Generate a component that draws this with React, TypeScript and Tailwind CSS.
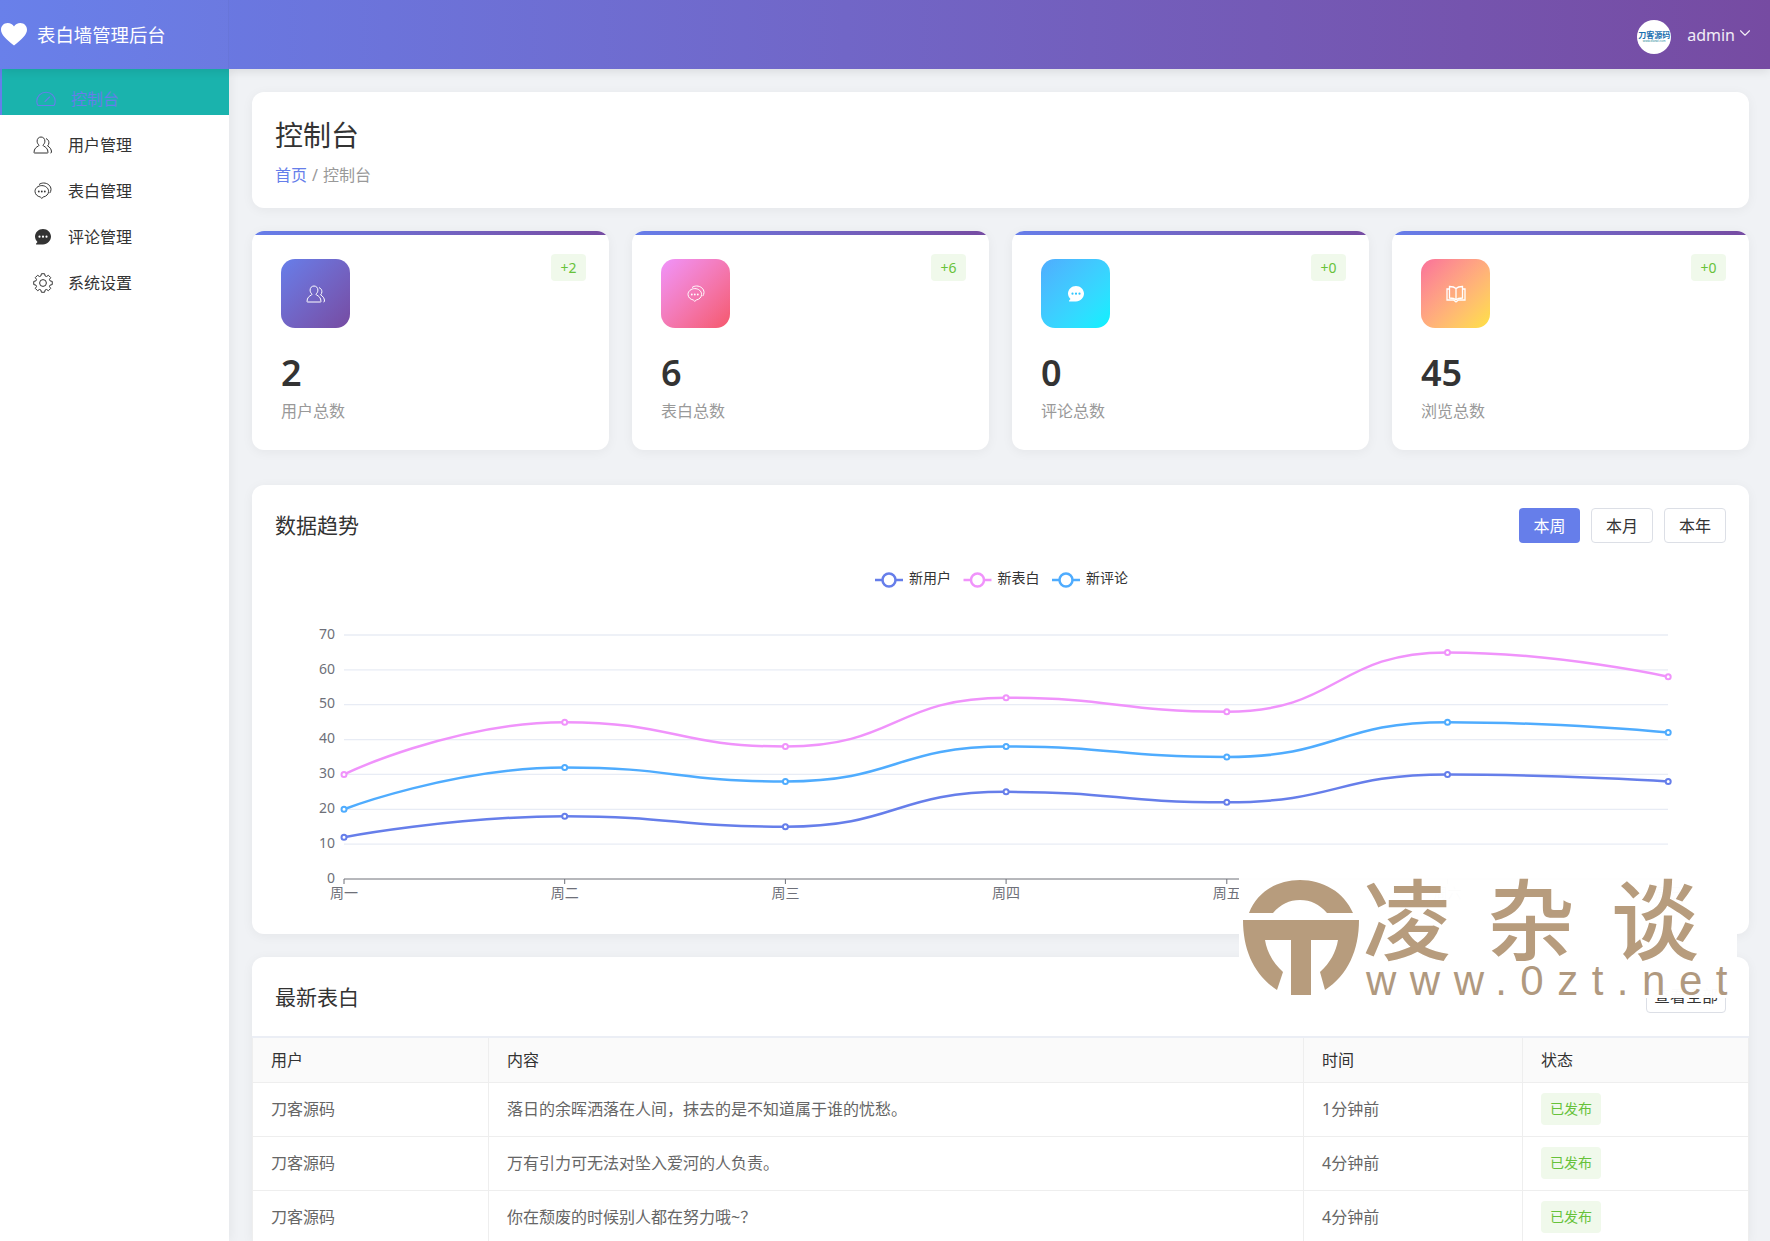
import React from 'react';
import { ChevronDown } from 'lucide-react';

const days = ['周一', '周二', '周三', '周四', '周五', '周六', '周日'];
const series = [
  { name: '新用户', color: '#667eea', data: [12, 18, 15, 25, 22, 30, 28] },
  { name: '新表白', color: '#f093fb', data: [30, 45, 38, 52, 48, 65, 58] },
  { name: '新评论', color: '#4facfe', data: [20, 32, 28, 38, 35, 45, 42] },
];

const xAt = (i: number) => 344 + i * 220.7;
const yAt = (v: number) => 880 - v * 3.486;

// same monotone smoothing the chart library does for smooth lines
const smoothPath = (data: number[]) => {
  const pts = data.map((v, i) => [xAt(i), yAt(v)]);
  const clamp = (v: number, a: number, b: number) => Math.max(Math.min(v, Math.max(a, b)), Math.min(a, b));
  let d = `M${pts[0][0]} ${pts[0][1]}`;
  let cx0 = pts[0][0];
  let cy0 = pts[0][1];
  for (let i = 1; i < pts.length; i++) {
    const [x, y] = pts[i];
    const [px, py] = pts[i - 1];
    const next = pts[i + 1];
    let cx1 = x;
    let cy1 = y;
    let nx = x;
    let ny = y;
    if (next) {
      const lenPrev = Math.hypot(x - px, y - py);
      const lenNext = Math.hypot(next[0] - x, next[1] - y);
      const ratio = lenNext / (lenNext + lenPrev);
      nx = clamp(x + (next[0] - px) * 0.5 * ratio, next[0], x);
      ny = clamp(y + (next[1] - py) * 0.5 * ratio, next[1], y);
      cx1 = clamp(x - ((nx - x) * lenPrev) / lenNext, px, x);
      cy1 = clamp(y - ((ny - y) * lenPrev) / lenNext, py, y);
      nx = x + ((x - cx1) * lenNext) / lenPrev;
      ny = y + ((y - cy1) * lenNext) / lenPrev;
    }
    d += ` C${cx0} ${cy0} ${cx1} ${cy1} ${x} ${y}`;
    cx0 = nx;
    cy0 = ny;
  }
  return d;
};

// 8 tooth gear outline
const gearPath = (() => {
  const p: string[] = [];
  for (let i = 0; i < 8; i++) {
    const a = (i * Math.PI) / 4;
    const at = (r: number, off: number) => `${(10 + r * Math.cos(a + off)).toFixed(2)} ${(10 + r * Math.sin(a + off)).toFixed(2)}`;
    p.push(`${i === 0 ? 'M' : 'L'}${at(7.3, -0.3)}`, `L${at(9.4, -0.17)}`, `L${at(9.4, 0.17)}`, `L${at(7.3, 0.3)}`);
  }
  return p.join(' ') + 'Z';
})();

const GaugeIcon = ({ className }: { className?: string }) => (
  <svg viewBox="0 0 20 16" fill="none" stroke="currentColor" strokeWidth="1.1" className={className}>
    <path d="M2 14.500C1.200 13.200.8 11.800.8 10.300.8 5.200 4.900 1.200 10 1.200s9.200 4 9.200 9.100c0 1.500-.4 2.900-1.200 4.200z" />
    <path d="M9 10.500l4.500-4.500" strokeLinecap="round" />
  </svg>
);

const UserIcon = ({ className }: { className?: string }) => (
  <svg viewBox="0 0 20 18" fill="none" stroke="currentColor" strokeWidth="1" className={className}>
    <path d="M8 1c-2.300 0-3.900 1.800-3.900 4.100 0 1.600.7 2.900 1.700 3.800.3.300.2.800-.2 1C3.300 11 1 12.700 1 16.500c0 .3.200.5.500.5h13c.3 0 .5-.2.500-.5 0-3.800-2.300-5.500-4.600-6.600-.4-.2-.5-.7-.2-1 1-.9 1.700-2.200 1.700-3.800C11.900 2.800 10.300 1 8 1z" />
    <path d="M13 2.600c1.800.6 2.900 2.200 2.900 4.100 0 1.300-.5 2.400-1.300 3.200 2 1.200 3.900 3.100 3.900 6.100 0 .5-.2 1-1 1" />
  </svg>
);

const LoveIcon = ({ className, dots }: { className?: string; dots?: string }) => (
  <svg viewBox="0 0 18 17" fill="none" stroke="currentColor" strokeWidth="1" className={className}>
    <path d="M7.800 3.600C4.100 3.600 1 6.200 1 9.400c0 2.800 2.300 5 5.300 5.600l1.500 1.400 1.500-1.400c3-.6 5.300-2.800 5.300-5.600 0-3.200-3.100-5.800-6.800-5.800z" />
    <path d="M5 2.600C6.300 1.500 8 1 9.600 1c4.100 0 7.400 2.900 7.400 6.400 0 1.500-.5 2.700-1.300 3.700" />
    <circle cx="4.800" cy="9.500" r=".9" fill={dots ?? 'currentColor'} stroke="none" />
    <circle cx="7.800" cy="9.500" r=".9" fill={dots ?? 'currentColor'} stroke="none" />
    <circle cx="10.800" cy="9.500" r=".9" fill={dots ?? 'currentColor'} stroke="none" />
  </svg>
);

const CommentIcon = ({ className, dots }: { className?: string; dots: string }) => (
  <svg viewBox="0 0 18 18" className={className}>
    <path fill="currentColor" d="M9 1c4.400 0 8 3.400 8 7.600s-3.600 7.800-8 7.800H2.600c-.6 0-.8-.6-.4-1l1.300-1.400C2 12.700 1 10.700 1 8.600 1 4.400 4.600 1 9 1z" />
    <circle cx="5.500" cy="8.700" r="1.100" fill={dots} />
    <circle cx="9" cy="8.700" r="1.100" fill={dots} />
    <circle cx="12.500" cy="8.700" r="1.100" fill={dots} />
  </svg>
);

const GearIcon = ({ className }: { className?: string }) => (
  <svg viewBox="0 0 20 20" fill="none" stroke="currentColor" strokeWidth="1" strokeLinejoin="round" className={className}>
    <path d={gearPath} />
    <circle cx="10" cy="10" r="3.400" />
  </svg>
);

const BookIcon = ({ className }: { className?: string }) => (
  <svg viewBox="0 0 20 18" fill="none" stroke="currentColor" strokeWidth="1.300" className={className}>
    <path d="M10 3.500C8.500 2 6.300 1.500 3.500 1.500V13c2.800 0 5 .4 6.500 1.800 1.500-1.400 3.700-1.800 6.500-1.800V1.500c-2.800 0-5 .5-6.500 2zM10 3.500v11.300" />
    <path d="M3.500 4H1v11h6.500l2.500 2 2.500-2H19V4h-2.500" />
  </svg>
);

const menu = [
  { label: '用户管理', icon: <UserIcon className="w-[20px] h-[18px]" /> },
  { label: '表白管理', icon: <LoveIcon className="w-[18px] h-[17px] ml-[1px]" /> },
  { label: '评论管理', icon: <CommentIcon className="w-[18px] h-[18px] ml-[1px]" dots="#ffffff" /> },
  { label: '系统设置', icon: <GearIcon className="w-[20px] h-[20px]" /> },
];

const stats = [
  { label: '用户总数', value: '2', inc: '+2', bg: 'bg-gradient-to-br from-[#667eea] to-[#764ba2]', icon: <UserIcon className="w-[20px] h-[18px]" /> },
  { label: '表白总数', value: '6', inc: '+6', bg: 'bg-gradient-to-br from-[#f093fb] to-[#f5576c]', icon: <LoveIcon className="w-[18px] h-[17px]" dots="#ffffff" /> },
  { label: '评论总数', value: '0', inc: '+0', bg: 'bg-gradient-to-br from-[#4facfe] to-[#00f2fe]', icon: <CommentIcon className="w-[18px] h-[18px]" dots="#2fc6fe" /> },
  { label: '浏览总数', value: '45', inc: '+0', bg: 'bg-gradient-to-br from-[#fa709a] to-[#fee140]', icon: <BookIcon className="w-[20px] h-[18px]" /> },
];

const rows = [
  { user: '刀客源码', text: '落日的余晖洒落在人间，抹去的是不知道属于谁的忧愁。', time: '1分钟前' },
  { user: '刀客源码', text: '万有引力可无法对坠入爱河的人负责。', time: '4分钟前' },
  { user: '刀客源码', text: '你在颓废的时候别人都在努力哦~？', time: '4分钟前' },
];

const TrendChart = () => (
  <svg viewBox="252 560 1497 375" className="block w-[1497px] h-[375px]">
    {[10, 20, 30, 40, 50, 60, 70].map((v) => (
      <line key={v} x1="344" x2="1668" y1={yAt(v)} y2={yAt(v)} stroke="#e0e6f1" strokeOpacity="0.75" strokeWidth="1.300" />
    ))}
    {[0, 10, 20, 30, 40, 50, 60, 70].map((v) => (
      <text key={v} x="335" y={yAt(v)} textAnchor="end" dominantBaseline="middle" fontSize="14" fill="#6e7079">
        {v}
      </text>
    ))}
    <line x1="344" x2="1668" y1="880" y2="880" stroke="#6e7079" />
    {days.map((d, i) => (
      <g key={d}>
        <line x1={xAt(i)} x2={xAt(i)} y1="880" y2="885" stroke="#6e7079" />
        <text x={xAt(i)} y="895" textAnchor="middle" dominantBaseline="middle" fontSize="14" fill="#6e7079">
          {d}
        </text>
      </g>
    ))}
    {series.map((s) => (
      <g key={s.name}>
        <path d={smoothPath(s.data)} fill="none" stroke={s.color} strokeWidth="2.500" />
        {s.data.map((v, i) => (
          <circle key={i} cx={xAt(i)} cy={yAt(v)} r="2.500" fill="#ffffff" stroke={s.color} strokeWidth="2" />
        ))}
      </g>
    ))}
    {series.map((s, i) => {
      const x = 875 + i * 88.500;
      return (
        <g key={s.name}>
          <line x1={x} x2={x + 28} y1="581" y2="581" stroke={s.color} strokeWidth="2.500" />
          <circle cx={x + 14} cy="581" r="6.500" fill="#ffffff" stroke={s.color} strokeWidth="2.500" />
          <text x={x + 34} y="580" dominantBaseline="middle" fontSize="14" fill="#333333">
            {s.name}
          </text>
        </g>
      );
    })}
  </svg>
);

const Watermark = () => (
  <div className="absolute left-[1239px] top-[873px] w-[498px] h-[125px] bg-white/[0.98] text-[#b79c7d]">
    <svg viewBox="0 0 116 116" className="absolute left-[4px] top-[7px] w-[116px] h-[116px]">
      <path fill="#b79c7d" d="M6 33C14 12 34 0 57 0s44 12 53 33H84C76 24 68 20 57 20S38 24 30 33z" />
      <path fill="#b79c7d" d="M0 40H116C116 70 105 95 82 110L77 92C87 83 93 72 95 60H68V115H48V60H22C24 72 30 83 40 92L34 110C11 95 0 70 0 40z" />
    </svg>
    <div className="absolute left-[124px] top-[-6px] text-[88px] leading-[104px] font-medium whitespace-nowrap tracking-[36px]">凌杂谈</div>
    <div className="absolute left-[127px] top-[87px] text-[42px] leading-[42px] text-[#b0997f] whitespace-nowrap tracking-[13.500px] [font-family:'Liberation_Sans',sans-serif]">www.0zt.net</div>
  </div>
);

export default function App() {
  return (
    <div className="relative w-[1770px] h-[1241px] overflow-hidden bg-[#f0f2f5] flex flex-col [font-family:'Noto_Sans','Noto_Sans_CJK_SC',sans-serif]">
      <header className="z-10 h-[69px] shrink-0 flex items-center bg-gradient-to-r from-[#667eea] to-[#764ba2] shadow-[0_2px_10px_rgba(0,0,0,0.1)]">
        <div className="w-[229px] h-full flex items-center gap-[10px] pl-[1px] bg-white/[0.02] border-r border-black/[0.03]">
          <svg viewBox="0 0 26 23" className="w-[26px] h-[23px]">
            <path fill="#ffffff" d="M13 22.500C5 16 0 11.600 0 6.700 0 2.900 2.900 0 6.700 0 9.300 0 11.800 1.300 13 3.400 14.200 1.300 16.700 0 19.300 0 23.100 0 26 2.900 26 6.700c0 4.900-5 9.300-13 15.800z" />
          </svg>
          <span className="text-[18.400px] pt-[1px] text-white whitespace-nowrap">表白墙管理后台</span>
        </div>
        <div className="ml-auto flex items-center pr-[16px] pt-[4px]">
          <div className="w-[34px] h-[34px] rounded-full bg-white flex flex-col items-center justify-center">
            <span className="text-[8px] leading-[9px] font-bold text-[#1a6fb0] whitespace-nowrap">刀客源码</span>
            <span className="text-[3px] leading-[4px] text-[#2a8a9a] whitespace-nowrap">www.dkewl.com</span>
          </div>
          <span className="ml-[16px] text-[16px] text-white/90 -mt-[4px]">admin</span>
          <ChevronDown className="ml-[1px] -mt-[8px] text-white/90" size={18} strokeWidth={1.500} />
        </div>
      </header>
      <div className="flex flex-1 min-h-0">
        <aside className="w-[229px] shrink-0 bg-white shadow-[2px_0_10px_rgba(0,0,0,0.05)]">
          <div className="h-[46px] flex items-center gap-[15px] border-l-2 border-[#667eea] bg-[#1ab3ad] pl-[34px] pt-[13px] text-[#667eea]">
            <GaugeIcon className="w-[20px] h-[16px]" />
            <span className="text-[16px]">控制台</span>
          </div>
          {menu.map((m) => (
            <div key={m.label} className="h-[46px] flex items-center pl-[33px] pt-[13px] text-[#333333]">
              <span className="w-[35px] flex items-center">{m.icon}</span>
              <span className="text-[16px]">{m.label}</span>
            </div>
          ))}
        </aside>
        <main className="flex-1 min-w-0 pt-[23px] pl-[23px] pr-[21px] flex flex-col">
          <section className="h-[116px] shrink-0 rounded-[12px] bg-white px-[23px] pt-[23px] shadow-[0_2px_12px_rgba(0,0,0,0.05)]">
            <h1 className="text-[28px] leading-[40px] text-[#333333]">控制台</h1>
            <div className="mt-[8px] text-[16px] leading-[24px] text-[#999999]">
              <span className="text-[#667eea]">首页</span>
              <span className="mx-[5px]">/</span>
              <span>控制台</span>
            </div>
          </section>
          <section className="mt-[23px] grid grid-cols-4 gap-[23px] shrink-0">
            {stats.map((s) => (
              <div key={s.label} className="relative h-[219px] rounded-[12px] bg-white overflow-hidden shadow-[0_2px_12px_rgba(0,0,0,0.05)]">
                <div className="h-[4px] bg-gradient-to-r from-[#667eea] to-[#764ba2]" />
                <div className="px-[29px] pt-[24px]">
                  <div className={`w-[69px] h-[69px] rounded-[14px] flex items-center justify-center text-white ${s.bg}`}>{s.icon}</div>
                  <div className="mt-[27px] text-[36px] leading-[36px] font-semibold text-[#333333]">{s.value}</div>
                  <div className="mt-[8px] text-[16px] leading-[24px] text-[#999999]">{s.label}</div>
                </div>
                <span className="absolute top-[23px] right-[23px] w-[35px] h-[27px] rounded-[4px] bg-[#f0f9eb] text-[14px] leading-[27px] text-center text-[#67c23a]">{s.inc}</span>
              </div>
            ))}
          </section>
          <section className="mt-[35px] h-[449px] shrink-0 rounded-[12px] bg-white overflow-hidden shadow-[0_2px_12px_rgba(0,0,0,0.05)]">
            <div className="px-[23px] pt-[23px] h-[74px] flex justify-between">
              <h2 className="text-[21px] leading-[35px] text-[#333333]">数据趋势</h2>
              <div className="flex gap-[11px] h-[35px]">
                <button className="w-[61px] rounded-[4px] bg-[#667eea] text-white text-[16px]">本周</button>
                <button className="w-[62px] rounded-[4px] border border-[#dcdfe6] bg-white text-[#333333] text-[16px]">本月</button>
                <button className="w-[62px] rounded-[4px] border border-[#dcdfe6] bg-white text-[#333333] text-[16px]">本年</button>
              </div>
            </div>
            <TrendChart />
          </section>
          <section className="mt-[23px] flex-1 rounded-t-[12px] bg-white overflow-hidden shadow-[0_2px_12px_rgba(0,0,0,0.05)]">
            <div className="px-[23px] pt-[21px] pb-[23px] flex justify-between border-b-2 border-[#ebeef5]">
              <h2 className="text-[21px] leading-[35px] mt-[2px] -mb-[2px] text-[#333333]">最新表白</h2>
              <button className="w-[80px] h-[35px] rounded-[4px] border border-[#dcdfe6] bg-white text-[#333333] text-[16px] whitespace-nowrap">查看全部</button>
            </div>
            <table className="w-full table-fixed border-collapse text-[16px] text-left">
              <colgroup>
                <col className="w-[236px]" />
                <col className="w-[815px]" />
                <col className="w-[219px]" />
                <col />
              </colgroup>
              <thead>
                <tr className="h-[44px] bg-[#fafafa] text-[#333333]">
                  {['用户', '内容', '时间', '状态'].map((h) => (
                    <th key={h} className="border border-t-0 border-[#eeeeee] px-[18px] font-normal">{h}</th>
                  ))}
                </tr>
              </thead>
              <tbody>
                {rows.map((r, i) => (
                  <tr key={i} className="h-[54px] text-[#666666]">
                    <td className="border border-[#eeeeee] px-[18px]">{r.user}</td>
                    <td className="border border-[#eeeeee] px-[18px]">{r.text}</td>
                    <td className="border border-[#eeeeee] px-[18px]">{r.time}</td>
                    <td className="border border-[#eeeeee] px-[18px]">
                      <span className="inline-block h-[32px] w-[60px] rounded-[4px] bg-[#f0f9eb] text-center text-[14px] leading-[32px] text-[#67c23a]">已发布</span>
                    </td>
                  </tr>
                ))}
              </tbody>
            </table>
          </section>
        </main>
      </div>
      <Watermark />
    </div>
  );
}
